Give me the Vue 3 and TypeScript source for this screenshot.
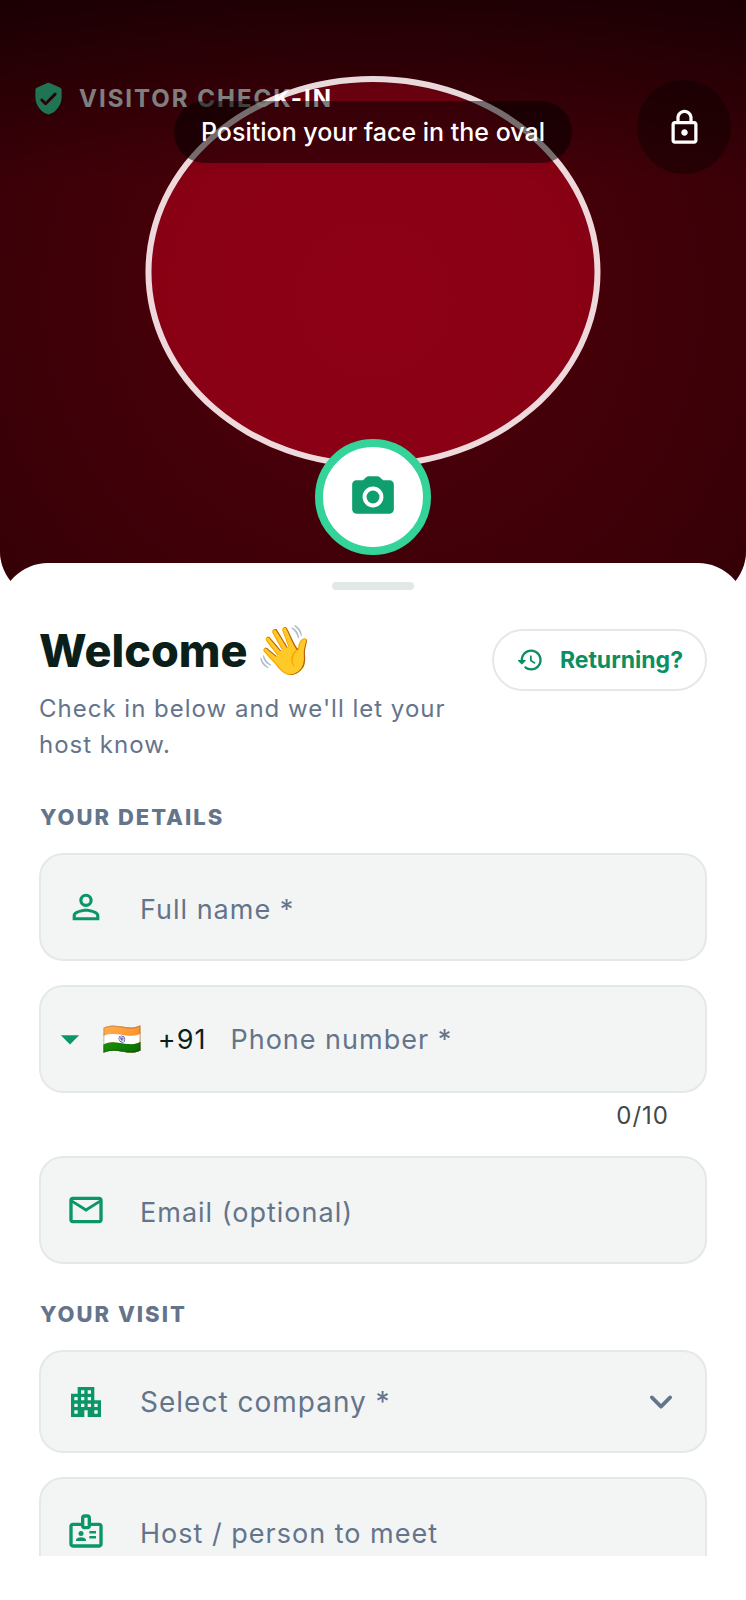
<script setup lang="ts">
import { computed, ref } from 'vue'

const fullName = ref('')
const phone = ref('')
const email = ref('')
const company = ref('')
const host = ref('')
const maxDigits = 10

const counter = computed(() => `${phone.value.length}/${maxDigits}`)
</script>

<template>
  <div class="screen">
    <div class="scroller">
      <header class="hero">
        <div class="topbar">
          <div class="brand">
            <svg class="shield" viewBox="0 0 24 24" aria-hidden="true">
              <path d="M11.19 1.36l-7 3.11C3.47 4.79 3 5.51 3 6.3V11c0 5.55 3.84 10.74 9 12 5.16-1.26 9-6.45 9-12V6.3c0-.79-.47-1.51-1.19-1.83l-7-3.11c-.51-.23-1.11-.23-1.62 0zm-1.9 14.93L6.7 13.7c-.39-.39-.39-1.02 0-1.41.39-.39 1.02-.39 1.41 0L10 14.17l5.88-5.88c.39-.39 1.02-.39 1.41 0 .39.39.39 1.02 0 1.41l-6.59 6.59c-.38.39-1.02.39-1.41 0z" />
            </svg>
            <span class="brand-name">VISITOR CHECK-IN</span>
          </div>
          <button class="lock" type="button" aria-label="Lock">
            <svg viewBox="0 0 24 24" aria-hidden="true">
              <path d="M18 8h-1V6c0-2.76-2.24-5-5-5S7 3.24 7 6v2H6c-1.1 0-2 .9-2 2v10c0 1.1.9 2 2 2h12c1.1 0 2-.9 2-2V10c0-1.1-.9-2-2-2zM9 6c0-1.66 1.34-3 3-3s3 1.34 3 3v2H9V6zm9 14H6V10h12v10zm-6-3c1.1 0 2-.9 2-2s-.9-2-2-2-2 .9-2 2 .9 2 2 2z" />
            </svg>
          </button>
        </div>
        <div class="oval"></div>
        <p class="hint">Position your face in the oval</p>
        <button class="shutter" type="button" aria-label="Take photo">
          <svg viewBox="0 0 24 24" aria-hidden="true">
            <circle cx="12" cy="12" r="3.1" />
            <path d="M10 2c-.5 0-.9.2-1.300.5L7.170 4H4c-1.100 0-2 .9-2 2v12c0 1.100.9 2 2 2h16c1.100 0 2-.9 2-2V6c0-1.100-.9-2-2-2h-3.170L15.300 2.500C14.900 2.200 14.500 2 14 2zm2 15c-2.760 0-5-2.240-5-5s2.240-5 5-5 5 2.240 5 5-2.240 5-5 5z" />
          </svg>
        </button>
      </header>

      <main class="sheet">
        <div class="handle"></div>

        <div class="intro">
          <div class="intro-text">
            <h1>Welcome<span class="wave">👋</span></h1>
            <p>Check in below and we'll let your host know.</p>
          </div>
          <button class="returning" type="button">
            <svg viewBox="0 0 24 24" aria-hidden="true">
              <path d="M13.260 3C8.170 2.860 4 6.950 4 12H2.210c-.45 0-.67.54-.35.85l2.790 2.800c.2.2.51.2.71 0l2.790-2.800c.31-.31.09-.85-.36-.85H6c0-3.900 3.180-7.050 7.100-7 3.720.05 6.850 3.180 6.900 6.900.05 3.910-3.100 7.100-7 7.100-1.610 0-3.100-.55-4.280-1.480-.4-.31-.96-.28-1.320.08-.42.42-.39 1.130.08 1.490C9 20.290 10.910 21 13 21c5.050 0 9.140-4.170 9-9.260-.13-4.690-4.050-8.610-8.740-8.740zm-.51 5c-.41 0-.75.34-.75.75v3.680c0 .35.19.68.49.86l3.120 1.850c.36.21.82.09 1.030-.26.21-.36.09-.82-.26-1.030l-2.880-1.710v-3.400c0-.4-.34-.74-.75-.74z" />
            </svg>
            Returning?
          </button>
        </div>

        <form @submit.prevent>
          <h2>YOUR DETAILS</h2>

          <label class="field">
            <svg class="icon" viewBox="0 0 24 24" aria-hidden="true">
              <path d="M12 5.900a2.100 2.100 0 1 1 0 4.200 2.100 2.100 0 0 1 0-4.200m0 9c2.970 0 6.100 1.460 6.100 2.100v1.100H5.900V17c0-.64 3.130-2.100 6.100-2.100M12 4C9.790 4 8 5.790 8 8s1.790 4 4 4 4-1.790 4-4-1.790-4-4-4zm0 9c-2.670 0-8 1.340-8 4v3h16v-3c0-2.660-5.330-4-8-4z" />
            </svg>
            <input v-model="fullName" class="low" type="text" placeholder="Full name *" aria-label="Full name" />
          </label>

          <div class="field phone">
            <button class="country" type="button" aria-label="Country code +91">
              <svg class="caret" viewBox="0 0 24 24" aria-hidden="true"><path d="M7 10l5 5 5-5z" /></svg>
              <span class="flag">🇮🇳</span>
              <span>+91</span>
            </button>
            <input v-model="phone" type="tel" :maxlength="maxDigits" placeholder="Phone number *" aria-label="Phone number" />
          </div>
          <div class="counter">{{ counter }}</div>

          <label class="field">
            <svg class="icon" viewBox="0 0 24 24" aria-hidden="true">
              <path d="M20 4H4c-1.100 0-2 .9-2 2v12c0 1.100.9 2 2 2h16c1.100 0 2-.9 2-2V6c0-1.100-.9-2-2-2zm0 14H4V8l8 5 8-5v10zm-8-7L4 6h16l-8 5z" />
            </svg>
            <input v-model="email" class="low" type="email" placeholder="Email (optional)" aria-label="Email" />
          </label>

          <h2>YOUR VISIT</h2>

          <label class="field select">
            <svg class="icon" viewBox="0 0 24 24" aria-hidden="true">
              <path d="M17 11V3H7v4H3v14h8v-4h2v4h8V11h-4zM7 19H5v-2h2v2zm0-4H5v-2h2v2zm0-4H5V9h2v2zm4 4H9v-2h2v2zm0-4H9V9h2v2zm0-4H9V5h2v2zm4 8h-2v-2h2v2zm0-4h-2V9h2v2zm0-4h-2V5h2v2zm4 12h-2v-2h2v2zm0-4h-2v-2h2v2z" />
            </svg>
            <select v-model="company" aria-label="Company">
              <option value="">Select company *</option>
            </select>
            <svg class="chevron" viewBox="0 0 24 24" aria-hidden="true"><path d="M7 9.500l5 5 5-5" /></svg>
          </label>

          <label class="field">
            <svg class="icon" viewBox="0 0 24 24" aria-hidden="true">
              <path d="M20 7h-5V4c0-1.100-.9-2-2-2h-2c-1.100 0-2 .9-2 2v3H4c-1.100 0-2 .9-2 2v11c0 1.100.9 2 2 2h16c1.100 0 2-.9 2-2V9c0-1.100-.9-2-2-2zm-9-3h2v5h-2V4zm9 16H4V9h5c0 1.100.9 2 2 2h2c1.100 0 2-.9 2-2h5v11z" />
              <circle cx="9" cy="13.500" r="1.500" />
              <path d="M11.080 16.180C10.440 15.900 9.740 15.750 9 15.750s-1.440.15-2.080.43C6.360 16.420 6 16.960 6 17.570V18h6v-.43c0-.61-.36-1.150-.92-1.390zM14 12h4v1.500h-4zM14 15h4v1.500h-4z" />
            </svg>
            <input v-model="host" class="low" type="text" placeholder="Host / person to meet" aria-label="Host or person to meet" />
          </label>
        </form>
      </main>
    </div>
  </div>
</template>

<style>
body {
  margin: 0;
  background: #fff;
}
</style>

<style scoped>
* {
  box-sizing: border-box;
}

.screen {
  height: 100vh;
  padding-bottom: 44px;
  background: #fff;
  color: #0b1f1a;
  font-family: Inter, "Liberation Sans", sans-serif;
}

.scroller {
  height: 100%;
  overflow-y: auto;
  scrollbar-width: none;
}

button,
input,
select {
  margin: 0;
  padding: 0;
  border: 0;
  background: none;
  color: inherit;
  font: inherit;
  letter-spacing: inherit;
}

h1,
h2,
p {
  margin: 0;
}

svg {
  display: block;
  flex: none;
  fill: currentColor;
}

.hero {
  position: relative;
  height: 599px;
  overflow: hidden;
  border-radius: 0 0 48px 48px;
  background:
    linear-gradient(rgba(0, 0, 0, 0.5), rgba(0, 0, 0, 0) 180px),
    radial-gradient(circle at 50% 50%, #8e0016 0, #8a0014 200px, #7e0010 320px, #6a000e 480px);
}

.topbar {
  display: flex;
  justify-content: space-between;
  align-items: flex-start;
  padding: 80px 15px 0 31px;
}

.brand {
  display: flex;
  align-items: center;
  gap: 13px;
  height: 36px;
}

.shield {
  width: 35px;
  height: 35px;
  color: #3ee8a8;
}

.brand-name {
  color: #fff;
  font-size: 24px;
  font-weight: 700;
  letter-spacing: 2px;
}

.lock {
  position: relative;
  z-index: 3;
  display: grid;
  place-items: center;
  width: 94px;
  height: 94px;
  border-radius: 50%;
  background: rgba(0, 0, 0, 0.35);
  color: #fff;
}

.lock svg {
  width: 39px;
  height: 39px;
}

.oval {
  position: absolute;
  z-index: 2;
  top: 76px;
  left: 50%;
  width: 61%;
  height: 392px;
  border: 6px solid rgba(255, 255, 255, 0.85);
  border-radius: 50%;
  box-shadow: 0 0 0 1600px rgba(0, 0, 0, 0.5);
  transform: translateX(-50%);
  pointer-events: none;
}

.hint {
  position: absolute;
  z-index: 3;
  top: 101px;
  left: 50%;
  padding: 0 27px;
  border-radius: 31px;
  background: rgba(0, 0, 0, 0.5);
  color: #fff;
  font-size: 25px;
  font-weight: 500;
  line-height: 62px;
  white-space: nowrap;
  transform: translateX(-50%);
}

.shutter {
  position: absolute;
  z-index: 3;
  bottom: 44px;
  left: 50%;
  display: grid;
  place-items: center;
  width: 116px;
  height: 116px;
  border: 8px solid #34d399;
  border-radius: 50%;
  background: #fff;
  color: #0f9f6e;
  transform: translateX(-50%);
}

.shutter svg {
  width: 50px;
  height: 50px;
}

.sheet {
  position: relative;
  z-index: 4;
  margin-top: -36px;
  padding: 19px 39px 40px;
  border-radius: 48px 48px 0 0;
  background: #fff;
}

.handle {
  width: 82px;
  height: 8px;
  margin: 0 auto 39px;
  border-radius: 4px;
  background: #e2e8e6;
}

.intro {
  display: flex;
  justify-content: space-between;
  align-items: flex-start;
  gap: 24px;
  margin-bottom: 41px;
}

.intro-text {
  flex: 1;
}

h1 {
  display: flex;
  align-items: center;
  gap: 8px;
  height: 44px;
  font-size: 45px;
  font-weight: 800;
  line-height: 44px;
}

.wave,
.flag {
  font-family: "Noto Color Emoji", sans-serif;
}

.wave {
  font-size: 48px;
}

.intro p {
  margin-top: 18px;
  color: #64748b;
  font-size: 24px;
  line-height: 36px;
  letter-spacing: 1px;
}

.returning {
  display: flex;
  align-items: center;
  gap: 16px;
  height: 62px;
  padding: 0 22px;
  border: 2px solid #e5e8e7;
  border-radius: 31px;
  color: #0b8f62;
  font-size: 23px;
  font-weight: 700;
}

.returning svg {
  width: 28px;
  height: 28px;
}

h2 {
  margin: 37px 0 23px 1px;
  color: #64748b;
  font-size: 22px;
  font-weight: 800;
  line-height: 26px;
  letter-spacing: 2px;
}

h2:first-child {
  margin-top: 0;
}

.field {
  display: flex;
  align-items: center;
  height: 108px;
  padding: 0 25px;
  border: 2px solid #e4e9e7;
  border-radius: 24px;
  background: #f3f5f5;
  color: #0b1f1a;
  font-size: 27px;
  letter-spacing: 1px;
}

.field + .field {
  margin-top: 24px;
}

.icon {
  width: 40px;
  height: 40px;
  margin-right: 34px;
  color: #0b9668;
}

input,
select {
  flex: 1;
  min-width: 0;
  height: 100%;
  outline: none;
}

input::placeholder {
  color: #64748b;
  opacity: 1;
}

.low {
  padding-top: 5px;
}

.field.phone {
  padding-left: 7px;
}

.country {
  display: flex;
  align-items: center;
  height: 100%;
  margin-right: 24px;
}

.caret {
  width: 44px;
  height: 44px;
  margin-right: 10px;
  color: #0b9668;
}

.flag {
  margin-right: 15px;
  font-size: 32px;
}

.counter {
  padding: 8px 38px 0 0;
  margin-bottom: 25px;
  color: #444746;
  font-size: 24px;
  line-height: 30px;
  letter-spacing: 1px;
  text-align: right;
}

.field.select {
  height: 103px;
  padding-right: 22px;
  font-size: 28px;
}

select {
  appearance: none;
  color: #64748b;
}

.chevron {
  width: 44px;
  height: 44px;
  fill: none;
  stroke: #64748b;
  stroke-width: 2;
  stroke-linecap: round;
  stroke-linejoin: round;
}
</style>
